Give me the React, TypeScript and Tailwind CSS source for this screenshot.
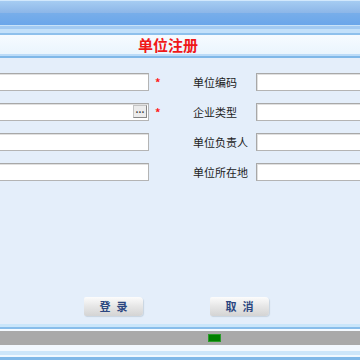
import React from "react"

const font = { fontFamily: '"Noto Sans CJK SC", "Noto Sans", sans-serif' }

const Field = ({ browse }: { browse?: boolean }) => (
    <div className="relative -ml-[2px] w-[151px] h-[18px] bg-white border border-[#b4b4b4] border-t-[#a8a8a8] border-l-[#a8a8a8] shadow-[inset_1px_1px_0_#e0e0e0]">
        {browse &&
            <div className="absolute right-[1px] top-[1px] w-[14px] h-[13px] bg-[#ececec] border border-[#c4c4c4] border-r-[#888] border-b-[#888] flex items-start justify-center text-[9px] leading-[8px] text-[#444] font-bold">
                ...
            </div>}
    </div>
)

const Row = ({ label, star, browse }: { label: string; star?: boolean; browse?: boolean }) => (
    <div className="flex items-center h-[30px]">
        <Field browse={browse} />
        <span className="w-[44px] pl-[6px] text-[11px] text-[#ff1a1a] font-bold leading-none">{star ? "*" : ""}</span>
        <span className="w-[63px] text-[11px] text-[#222]">{label}</span>
        <div className="flex-1 h-[18px] bg-white border border-[#b4b4b4] border-t-[#a8a8a8] border-l-[#a8a8a8] border-r-0 shadow-[inset_1px_1px_0_#e0e0e0]" />
    </div>
)

const Btn = ({ text }: { text: string }) => (
    <button type="button" className="w-[59px] h-[19px] rounded-r-[4px] rounded-l-[2px] bg-gradient-to-b from-[#fcfcfc] via-[#e6e6e6] to-[#d4d4d4] shadow-[1px_1px_1px_#c8d4e0] text-[11px] font-bold text-[#2b4680] tracking-[6px] pl-[6px] leading-[19px]">
        {text}
    </button>
)

export default function App() {
    return (
        <div className="w-[360px] h-[360px] overflow-hidden flex flex-col bg-[#e4eefa]" style={font}>
            <div className="h-[1px] bg-[#d2e8fc]" />
            <div className="h-[12px] bg-gradient-to-b from-[#a6ccf2] to-[#8cb6e8]" />
            <div className="h-[12px] bg-gradient-to-b from-[#78aeea] to-[#6aa6ea]" />
            <div className="h-[1px] bg-[#c8e2f8]" />
            <div className="h-[3px] bg-[#a2caf2]" />
            <div className="h-[4px] bg-[#c2e0fa]" />
            <div className="h-[2px] bg-[#8ec0ec]" />
            <div className="h-[19px] bg-gradient-to-b from-[#f6fbff] to-[#eaf5fd] flex items-center justify-center">
                <span className="-ml-[24px] text-[15px] font-bold text-[#f01818] leading-none">单位注册</span>
            </div>
            <div className="h-[2px] bg-[#bcdcf8]" />
            <div className="h-[2px] bg-[#80b8e8]" />
            <div className="flex-1 flex flex-col pt-[9px]">
                <Row label="单位编码" star />
                <Row label="企业类型" star browse />
                <Row label="单位负责人" />
                <Row label="单位所在地" />
                <div className="flex mt-[110px] pl-[84px] gap-[67px]">
                    <Btn text="登录" />
                    <Btn text="取消" />
                </div>
            </div>
            <div className="h-[3px] bg-[#cae6fa]" />
            <div className="h-[2px] bg-[#88bdea]" />
            <div className="h-[2px] bg-[#f4faff]" />
            <div className="h-[14px] bg-[#a9a9a9] flex items-center pl-[208px]">
                <div className="w-[13px] h-[8px] bg-[#008000] border border-[#2a9a2a]" />
            </div>
            <div className="h-[6px] bg-[#f2f8fe]" />
            <div className="h-[4px] bg-[#cde6fa]" />
            <div className="h-[2px] bg-[#f0f8ff]" />
            <div className="h-[3px] bg-[#80b8e8]" />
        </div>
    )
}
